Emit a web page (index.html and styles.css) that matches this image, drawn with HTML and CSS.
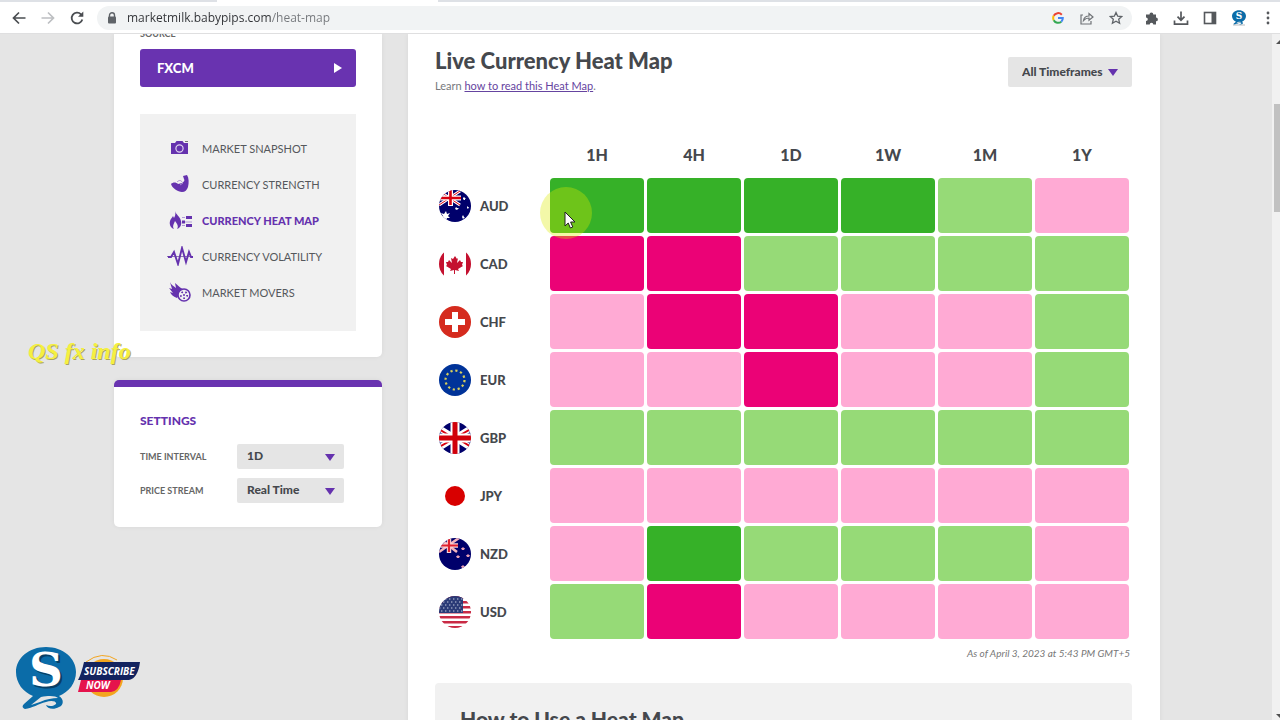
FILE: index.html
```html
<!DOCTYPE html>
<html lang="en">
<head>
<meta charset="utf-8">
<title>Live Currency Heat Map</title>
<link rel="stylesheet" href="styles.css">
</head>
<body>
<svg class="defs" aria-hidden="true">
  <defs>
    <clipPath id="round"><circle cx="16" cy="16" r="16"/></clipPath>
    <symbol id="logo" viewBox="0 0 60 62">
      <path d="M30 0C47 0 60 11 60 25c0 11-7 20-17 24 5 3 5 9 0 11-5 3-12 2-13-2 4 2 8 1 10-1 1-3-5-4-10-2-8 2-13 6-21 7-3-1-3-3-1-5l9-8C7 45 0 36 0 25 0 11 13 0 30 0z" fill="#0b6ca8"/>
      <path d="M25 50c9-2 15-1 17 1-6 0-11 1-18 4l-9 3z" fill="#e5e5e5"/>
    </symbol>
  </defs>
</svg>

<header class="toolbar">
  <nav class="nav-buttons">
    <button class="icon-btn" aria-label="Back"><svg width="16" height="16" viewBox="0 0 16 16" fill="none" stroke="#4a4d51" stroke-width="1.7"><path d="M14.500 8H2.500M8 2.500L2.500 8 8 13.500"/></svg></button>
    <button class="icon-btn" aria-label="Forward"><svg width="16" height="16" viewBox="0 0 16 16" fill="none" stroke="#bdbfc2" stroke-width="1.700"><path d="M1.500 8h12M8 2.500L13.500 8 8 13.500"/></svg></button>
    <button class="icon-btn" aria-label="Reload"><svg width="16" height="16" viewBox="0 0 16 16" fill="none" stroke="#4a4d51" stroke-width="1.800"><path d="M13.300 9.500A5.400 5.400 0 1 1 12 4.300l1.500 1.400"/><path d="M14.300 1.500v5.300H9z" fill="#4a4d51" stroke="none"/></svg></button>
  </nav>
  <div class="omnibox">
    <svg width="10" height="12" viewBox="0 0 10 12"><path d="M2.500 5V3.300a2.500 2.500 0 0 1 5 0V5" fill="none" stroke="#5f6368" stroke-width="1.400"/><rect x="1" y="4.500" width="8" height="7" rx="1" fill="#5f6368"/></svg>
    <input class="url" aria-label="Address" value="marketmilk.babypips.com/heat-map">
    <button class="icon-btn" aria-label="Google"><svg width="12" height="12" viewBox="0 0 12 12" fill="none" stroke-width="2"><path d="M9.800 2.700A5 5 0 0 0 1.700 3.800" stroke="#ea4335"/><path d="M1.700 3.800a5 5 0 0 0 0 4.400" stroke="#fbbc05"/><path d="M1.700 8.200a5 5 0 0 0 7.600 1.500" stroke="#34a853"/><path d="M9.300 9.700A5 5 0 0 0 10.800 6H6" stroke="#4285f4"/></svg></button>
    <button class="icon-btn" aria-label="Share"><svg width="14" height="14" viewBox="0 0 14 14" fill="none" stroke="#6f7276" stroke-width="1.200"><path d="M3 4H1v9h10v-3M3.500 9.500C4 6.500 6 5 9 5V2.500L13 6 9 9.300V7C6.500 7 5 7.800 3.500 9.500z"/></svg></button>
    <button class="icon-btn" aria-label="Bookmark"><svg width="14" height="14" viewBox="0 0 14 14" fill="none" stroke="#5f6368" stroke-width="1.300"><path d="M7 1.500l1.700 3.700 4 .4-3 2.700.9 4L7 10.200l-3.600 2.100.9-4-3-2.700 4-.4z"/></svg></button>
  </div>
  <div class="actions">
    <button class="icon-btn" aria-label="Extensions"><svg width="14" height="14" viewBox="0 0 14 14" fill="#55585c"><path d="M1 3.500h3.500a1.900 1.900 0 1 1 3.800 0H11V6.500a1.900 1.900 0 1 1 0 3.800V13.500H8.300a1.800 1.800 0 1 0-3.600 0H1V10a1.800 1.800 0 1 0 0-3.600z"/></svg></button>
    <button class="icon-btn" aria-label="Downloads"><svg width="16" height="16" viewBox="0 0 16 16" fill="none" stroke="#55585c" stroke-width="1.700"><path d="M8 1.500v8.500M4.500 6.700L8 10.200l3.500-3.500M1.500 10.500v3.700h13v-3.700"/></svg></button>
    <button class="icon-btn" aria-label="Side panel"><svg width="14" height="14" viewBox="0 0 14 14"><rect x="1.500" y="1.500" width="11" height="11" fill="none" stroke="#55585c" stroke-width="1.600"/><path d="M8.500 1.500h4v11h-4z" fill="#55585c"/></svg></button>
    <button class="icon-btn" aria-label="Profile"><svg width="14" height="16" viewBox="0 0 14 16"><use href="#logo" x="0" width="14" height="15"/><text class="logo-s" x="7" y="9" font-size="9">S</text><path d="M1 15h12" stroke="#b9bcc0"/></svg></button>
    <button class="icon-btn" aria-label="Menu"><svg width="4" height="14" viewBox="0 0 4 14" fill="#55585c"><circle cx="2" cy="2" r="1.400"/><circle cx="2" cy="7" r="1.400"/><circle cx="2" cy="12" r="1.400"/></svg></button>
  </div>
</header>

<div class="viewport">
  <div class="page">
    <aside class="sidebar">
      <section class="card source">
        <div class="source-label" id="source-label">SOURCE</div>
        <button class="source-btn" aria-describedby="source-label">FXCM <svg width="8" height="10" viewBox="0 0 8 10"><path d="M0 0l8 5-8 5z" fill="#fff"/></svg></button>
        <nav class="menu">
          <a href="#"><svg width="26" height="20" viewBox="0 0 26 20"><path d="M4 5h4l1.500-2h6L17 5h4v11H4z" fill="#6532ae"/><circle cx="12.500" cy="10.500" r="3.600" fill="none" stroke="#e0d4f0" stroke-width="1.200"/><path d="M18 3.500h3" stroke="#777"/></svg>MARKET SNAPSHOT</a>
          <a href="#"><svg width="26" height="20" viewBox="0 0 26 20"><path d="M4 10c2-2 5-2 7 0l4-1c2-1 3-3 2-4l-1-3 4-1c2 3 2 8 1 12-1 3-3 5-6 5C11 18 5 14 4 10z" fill="#6532ae"/><path d="M10 8c2-2 4-2 5 0M13 11l3-2" stroke="#a78bd0" fill="none"/></svg>CURRENCY STRENGTH</a>
          <a href="#" class="active"><svg width="26" height="20" viewBox="0 0 26 20"><path d="M8 1c1 4 5 5 6 10 1 4-1 7-4 8 2-3 0-5-2-8-1 3-3 5-1 8-3-1-5-4-4-8 1-3 2-3 3-5l1 2c1-2 2-4 1-7z" fill="#6532ae"/><path d="M19 6h6v3h-6zM19 14h6v3h-6zM15 10.500h3v3h-3z" fill="#6532ae"/><path d="M15 7.500h3M18 12h7M15 15.500h3" stroke="#b39bd8"/></svg>CURRENCY HEAT MAP</a>
          <a href="#"><svg width="26" height="20" viewBox="0 0 26 20" fill="none" stroke="#6532ae"><path d="M0 10.500h26" stroke="#8f7ab0"/><path d="M1 11h3l3-5 4 12 4-16 4 14 3-10 2 5h2" stroke-width="1.900"/></svg>CURRENCY VOLATILITY</a>
          <a href="#"><svg width="26" height="20" viewBox="0 0 26 20"><path d="M3 0c1 3 4 4 6 6L8 1c3 2 5 5 8 6l-6 9c-3-1-6-3-7-6l3 1-4-5 3 1z" fill="#6532ae"/><circle cx="17" cy="13" r="6" fill="#f1f1f1" stroke="#6532ae" stroke-width="1.600"/><circle cx="17" cy="13" r="3.200" fill="none" stroke="#6532ae" stroke-width="1.800" stroke-dasharray="1.600 2.400"/><circle cx="17" cy="13" r="1" fill="#6532ae"/></svg>MARKET MOVERS</a>
        </nav>
      </section>
      <section class="card settings">
        <h3>SETTINGS</h3>
        <div class="setting">
          <label for="interval">TIME INTERVAL</label>
          <span class="select"><select id="interval"><option>1D</option></select></span>
        </div>
        <div class="setting">
          <label for="stream">PRICE STREAM</label>
          <span class="select"><select id="stream"><option>Real Time</option></select></span>
        </div>
      </section>
    </aside>

    <main class="main">
      <div class="heading">
        <div>
          <h1>Live Currency Heat Map</h1>
          <p>Learn <a href="#how-to">how to read this Heat Map</a>.</p>
        </div>
        <span class="select timeframes"><select aria-label="Timeframes"><option>All Timeframes</option></select></span>
      </div>
      <table class="heatmap">
        <colgroup><col class="pair-col"><col span="6"></colgroup>
        <thead><tr><td></td><th scope="col">1H</th><th scope="col">4H</th><th scope="col">1D</th><th scope="col">1W</th><th scope="col">1M</th><th scope="col">1Y</th></tr></thead>
        <tbody>
          <tr><th scope="row"><span class="currency"><svg viewBox="0 0 32 32"><g clip-path="url(#round)"><path d="M0 0h32v32H0z" fill="#00006b"/><path d="M0 1l21 14M21 1L0 15" stroke="#fff" stroke-width="3"/><path d="M0 1l21 14M21 1L0 15" stroke="#d8000f"/><path d="M11.500 0v16M0 8h22" stroke="#fff" stroke-width="5"/><path d="M11.500 0v15M0 8h22" stroke="#d8000f" stroke-width="2.600"/><path d="M7 21l1 3 3-1-2 3 2 2-3 0-1 3-2-3-3 0 2-2-2-3 3 1zM25 7l1 1h1l-1 1v1h-1l-1-1 0-1zM17 17l1 1h2l-2 2-2-1zM28 16l1 1h1l-1 2-1-1zM24 25l1 2h1l-2 2-1-2z" fill="#fff"/></g></svg>AUD</span></th><td class="up2"></td><td class="up2"></td><td class="up2"></td><td class="up2"></td><td class="up1"></td><td class="down1"></td></tr>
          <tr><th scope="row"><span class="currency"><svg viewBox="0 0 32 32"><g clip-path="url(#round)" fill="#c4112f"><path d="M0 0h5v32H0zM27 0h5v32h-5z"/><path d="M16 8l2 3 1-1-1 5 3-3 1 2 2 0-1 3 1 1-5 3 1 2-4-1v4h-1v-4l-4 1 1-2-5-3 1-1-1-3 2 0 1-2 3 3-1-5 2 1z"/></g></svg>CAD</span></th><td class="down2"></td><td class="down2"></td><td class="up1"></td><td class="up1"></td><td class="up1"></td><td class="up1"></td></tr>
          <tr><th scope="row"><span class="currency"><svg viewBox="0 0 32 32"><circle cx="16" cy="16" r="16" fill="#d52b1e"/><path d="M13 6h6v7h7v6h-7v7h-6v-7H6v-6h7z" fill="#fff"/></svg>CHF</span></th><td class="down1"></td><td class="down2"></td><td class="down2"></td><td class="down1"></td><td class="down1"></td><td class="up1"></td></tr>
          <tr><th scope="row"><span class="currency"><svg viewBox="0 0 32 32"><circle cx="16" cy="16" r="16" fill="#039"/><circle cx="16" cy="16" r="9.500" fill="none" stroke="#d8cf5a" stroke-width="2.200" stroke-dasharray="2.200 2.774"/></svg>EUR</span></th><td class="down1"></td><td class="down1"></td><td class="down2"></td><td class="down1"></td><td class="down1"></td><td class="up1"></td></tr>
          <tr><th scope="row"><span class="currency"><svg viewBox="0 0 32 32"><g clip-path="url(#round)"><path d="M0 0h32v32H0z" fill="#00006b"/><path d="M-5 3l42 26M37 3L-5 29" stroke="#fff" stroke-width="6"/><path d="M-5 4l21 13M37 4L16 16M37 28L16 15M-5 28l21-12" stroke="#d8000f" stroke-width="1.800"/><path d="M16 0v32M0 16h32" stroke="#fff" stroke-width="9"/><path d="M16 0v32M0 16h32" stroke="#d0000a" stroke-width="5"/></g></svg>GBP</span></th><td class="up1"></td><td class="up1"></td><td class="up1"></td><td class="up1"></td><td class="up1"></td><td class="up1"></td></tr>
          <tr><th scope="row"><span class="currency"><svg viewBox="0 0 32 32"><circle cx="16" cy="16" r="10" fill="#d80000"/></svg>JPY</span></th><td class="down1"></td><td class="down1"></td><td class="down1"></td><td class="down1"></td><td class="down1"></td><td class="down1"></td></tr>
          <tr><th scope="row"><span class="currency"><svg viewBox="0 0 32 32"><g clip-path="url(#round)"><path d="M0 0h32v32H0z" fill="#00006b"/><path d="M0 0l18 14M20 0L0 14" stroke="#f5b5bd" stroke-width="2.600"/><path d="M10 0v15M0 7.500h19" stroke="#fbd5d8" stroke-width="4.400"/><path d="M10 0v14M0 7.500h19" stroke="#e0202d" stroke-width="2.200"/><g fill="#e9a0b4"><path d="M24 9l1 1h1l-1 2-1 0-1 0-1-2h1zM19 17l1 1h1l-1 2-1 0-1 0-1-2h1zM29 16l1 1h1l-1 2-1 0-1 0-1-2h1zM24 27l1 1h1l-1 2-1 0-1 0-1-2h1z"/></g></g></svg>NZD</span></th><td class="down1"></td><td class="up2"></td><td class="up1"></td><td class="up1"></td><td class="up1"></td><td class="down1"></td></tr>
          <tr><th scope="row"><span class="currency"><svg viewBox="0 0 32 32"><g clip-path="url(#round)"><path d="M0 0h32v32H0z" fill="#fff"/><path d="M0 1.200h32M0 6.200h32M0 11.200h32M0 16.200h32M0 21.200h32M0 26.200h32M0 31.200h32" stroke="#c92a45" stroke-width="2.400"/><path d="M0 0h24v17H0z" fill="#2b3a77"/><path d="M2 3h22M0 6h22M2 9h22M0 12h22M2 15h22" stroke="#c5cbe0" stroke-width="1.200" stroke-dasharray="1.400 2.600"/></g></svg>USD</span></th><td class="up1"></td><td class="down2"></td><td class="down1"></td><td class="down1"></td><td class="down1"></td><td class="down1"></td></tr>
        </tbody>
      </table>
      <p class="as-of">As of April 3, 2023 at 5:43 PM GMT+5</p>
      <section class="how-to" id="how-to"><h2>How to Use a Heat Map</h2></section>
    </main>
  </div>
  <div class="scrollbar" aria-hidden="true"><span class="arrow-up"></span><span class="thumb"></span><span class="arrow-down"></span></div>
</div>

<div class="click-halo"></div>
<svg class="cursor" width="12" height="18" viewBox="0 0 12 18"><path d="M1 1v14l3.200-3 2.200 5 2.400-1-2.200-5H11z" fill="#fff" stroke="#222"/></svg>
<div class="watermark">QS fx info</div>
<div class="badge">
  <svg width="60" height="62" viewBox="0 0 60 62"><use href="#logo" width="60" height="62"/><text class="logo-s shade" x="32" y="41" font-size="47">S</text><text class="logo-s" x="30" y="39" font-size="47">S</text></svg>
  <svg width="64" height="46" viewBox="0 0 64 46"><circle cx="26" cy="23" r="19" fill="#f3a51f"/><path d="M8 7Q24-5 39 5" fill="none" stroke="#f3a51f"/><path d="M6 7h56q-2 16-11 18H0q3-5 6-18z" fill="#13235f"/><path d="M3 25h40q-2 11-10 12H0z" fill="#e5134c"/><text class="sub-text" x="6" y="20" font-size="10">SUBSCRIBE</text><text class="sub-text" x="8" y="34" font-size="10">NOW</text></svg>
</div>
</body>
</html>
```

FILE: styles.css
```css
* { box-sizing: border-box; }
body {
  margin: 0;
  height: 100vh;
  display: flex;
  flex-direction: column;
  overflow: hidden;
  background: #e5e5e5;
  color: #45484d;
  font-family: Lato, "Open Sans", sans-serif;
}
button, input, select { font: inherit; color: inherit; }
h1, h2, h3, p { margin: 0; }
svg { display: block; flex: none; }
.defs { position: absolute; width: 0; height: 0; }

/* Browser toolbar */
.toolbar {
  flex: none;
  display: flex;
  align-items: center;
  gap: 8px;
  height: 34px;
  padding: 2px 0 0 7px;
  border-bottom: 1px solid #dfdfe0;
  background: linear-gradient(90deg, #dee1e6 217px, #fff 217px 438px, #dee1e6 438px) 0 0 / 100% 2px no-repeat, #fff;
}
.icon-btn {
  display: grid;
  place-items: center;
  width: 24px;
  height: 24px;
  padding: 0;
  border: 0;
  background: none;
}
.nav-buttons { display: flex; gap: 5px; }
.omnibox {
  flex: 1;
  display: flex;
  align-items: center;
  gap: 5px;
  height: 24px;
  padding: 0 4px 0 10px;
  border-radius: 12px;
  background: #f1f3f4;
}
.url {
  flex: 1;
  min-width: 0;
  margin-left: 5px;
  padding: 0;
  border: 0;
  font: 12px/20px "Open Sans", sans-serif;
  color: transparent;
  background: linear-gradient(90deg, #303236 144px, #74777b 144px);
  background-clip: text;
  -webkit-background-clip: text;
}
.actions { display: flex; gap: 5px; }
.logo-s {
  font-family: "DejaVu Serif", serif;
  font-weight: 700;
  fill: #fff;
  text-anchor: middle;
}
.logo-s.shade { fill: #073f66; }

/* Page */
.viewport { flex: 1; min-height: 0; display: flex; overflow: hidden; }
.page {
  flex: 1;
  display: flex;
  justify-content: center;
  align-items: flex-start;
  gap: 26px;
  padding-left: 2px;
}
.sidebar { width: 268px; display: flex; flex-direction: column; gap: 23px; }
.card {
  padding: 0 26px;
  border-radius: 5px;
  background: #fff;
  box-shadow: 0 0 5px rgba(0, 0, 0, .06);
}
.source { padding-bottom: 26px; border-radius: 0 0 5px 5px; }
.source-label {
  margin: -6px 0 9px;
  font-size: 9px;
  line-height: 12px;
  font-weight: 700;
  color: #666;
}
.source-btn {
  display: flex;
  align-items: center;
  justify-content: space-between;
  width: 100%;
  height: 38px;
  padding: 0 14px 0 17px;
  border: 0;
  border-radius: 3px;
  background: #6933b0;
  color: #fff;
  font-size: 13px;
  font-weight: 900;
}
.menu { margin-top: 27px; padding: 16px 27px 21px; background: #f1f1f1; }
.menu a {
  display: flex;
  align-items: center;
  gap: 9px;
  height: 36px;
  font-size: 11px;
  color: #55585c;
  text-decoration: none;
  white-space: nowrap;
}
.menu .active { color: #6532ae; font-weight: 900; }
.settings { padding-top: 24px; padding-bottom: 24px; border-top: 7px solid #6933b0; }
.settings h3 {
  margin-bottom: 13px;
  font-size: 12px;
  line-height: 20px;
  font-weight: 900;
  color: #6532ae;
}
.setting { display: flex; align-items: center; }
.setting + .setting { margin-top: 9px; }
.setting label { width: 97px; font-size: 9px; font-weight: 700; color: #666; }
.setting .select { width: 107px; }
.select { position: relative; display: block; flex: none; }
.select::after {
  content: "";
  position: absolute;
  right: 9px;
  top: 50%;
  margin-top: -3px;
  border: 5px solid transparent;
  border-top: 7px solid #6532ae;
  border-bottom: 0;
  pointer-events: none;
}
.select select {
  display: block;
  appearance: none;
  width: 100%;
  height: 25px;
  padding: 0 10px 2px;
  border: 0;
  border-radius: 2px;
  background: #e5e5e5;
  font-size: 12px;
  font-weight: 900;
}

.main {
  flex: 0 1 752px;
  padding: 13px 28px 40px 27px;
  background: #fff;
  box-shadow: 0 0 5px rgba(0, 0, 0, .06);
}
.heading { display: flex; justify-content: space-between; align-items: flex-start; }
h1 { font-size: 22px; line-height: 28px; font-weight: 900; }
.heading p { margin-top: 3px; font-size: 11px; line-height: 16px; color: #77797d; }
.heading a { color: #6544a0; }
.timeframes { width: 124px; margin-top: 10px; }
.timeframes::after { right: 14px; }
.timeframes select { height: 30px; padding: 0 14px 2px; }

.heatmap {
  width: 100%;
  margin-top: 38px;
  table-layout: fixed;
  border-collapse: separate;
  border-spacing: 3px;
}
.pair-col { width: 109px; }
.heatmap th, .heatmap td { padding: 0; }
.heatmap thead th { height: 40px; padding-bottom: 2px; font-size: 16px; font-weight: 900; }
.heatmap tbody td { height: 55px; border-radius: 4px; }
.currency { display: flex; align-items: center; gap: 9px; padding-left: 1px; font-size: 13px; font-weight: 900; }
.currency svg { width: 32px; height: 32px; }
.up2 { background: #36b128; }
.up1 { background: #96da77; }
.down1 { background: #ffaad4; }
.down2 { background: #eb0276; }
.as-of {
  margin: 3px 2px 22px 0;
  font-size: 10px;
  line-height: 16px;
  font-style: italic;
  text-align: right;
  color: #777;
}
.how-to { padding: 23px 25px; border-radius: 4px; background: #f1f1f1; }
.how-to h2 { font-size: 21px; line-height: 26px; font-weight: 900; }

.scrollbar {
  flex: none;
  display: flex;
  flex-direction: column;
  width: 8px;
  padding: 6px 0 2px 2px;
  overflow: hidden;
  background: #f1f1f1;
}
.arrow-up, .arrow-down { width: 8px; margin-left: 2px; border: 4px solid transparent; }
.arrow-up { border-top: 0; border-bottom-color: #505050; }
.arrow-down { margin-top: auto; border-bottom: 0; border-top-color: #505050; }
.thumb { width: 13px; height: 108px; margin-top: 60px; background: #c1c1c1; }

/* Video overlays */
.click-halo {
  position: absolute;
  left: 540px;
  top: 187px;
  width: 52px;
  height: 52px;
  border-radius: 50%;
  background: rgba(220, 235, 0, .34);
}
.cursor { position: absolute; left: 564px; top: 211px; }
.watermark {
  position: absolute;
  left: 28px;
  top: 334px;
  font: italic 700 24px/34px "Liberation Serif", serif;
  color: #f5f03f;
  text-shadow: 1px 1px 0 #aaa65c;
  white-space: nowrap;
}
.badge { position: absolute; left: 16px; top: 647px; display: flex; align-items: center; gap: 2px; }
.sub-text { font-family: "Open Sans", sans-serif; font-weight: 700; font-style: italic; fill: #fff; }
```
